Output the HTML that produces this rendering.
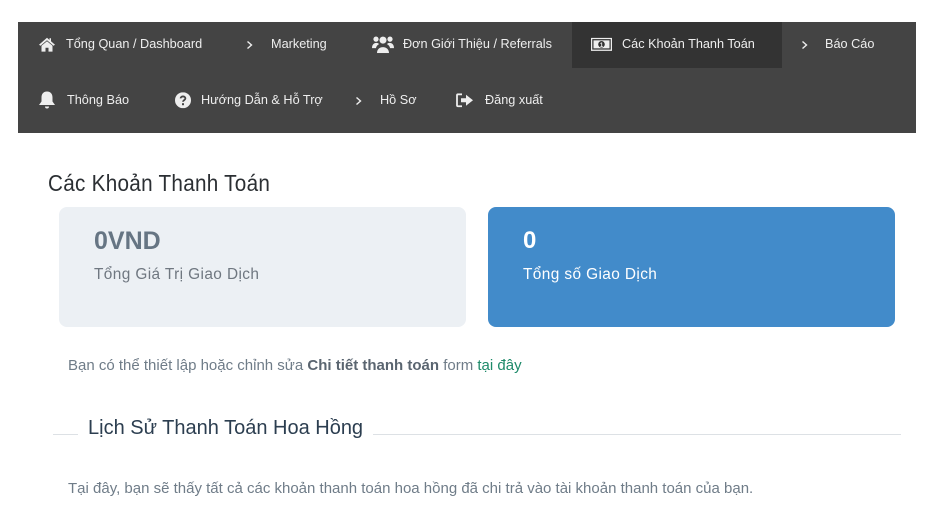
<!DOCTYPE html>
<html><head><meta charset="utf-8"><style>
*{margin:0;padding:0;box-sizing:border-box}
body{width:931px;height:525px;background:#fff;font-family:"Liberation Sans",sans-serif;position:relative;overflow:hidden}
.nav{position:absolute;left:18px;top:22px;width:898px;height:111px;background:#444}
.it{position:absolute;color:#eee;font-size:12.7px;line-height:44px;height:46px;white-space:nowrap}
.it svg{position:absolute;top:50%;transform:translateY(-55%)}
.act{background:#333}
h1{position:absolute;left:48px;top:170px;font-weight:normal;font-size:23px;color:#2b2f33;letter-spacing:.3px;transform:scaleX(.9);transform-origin:0 0}
.card{position:absolute;top:207px;width:407px;height:120px;border-radius:8px}
.card .n{position:absolute;left:35px;top:20px;font-size:24px;font-weight:bold}
.card .l{position:absolute;left:35px;top:59px;font-size:15.4px;letter-spacing:.4px}
p{position:absolute;font-size:15px;color:#6f7c88}
.h2{position:absolute;left:88px;top:417px;font-size:20px;color:#2c3e50}
.line{position:absolute;top:434px;height:1px;background:#dde1e5}
</style></head><body>
<div class="nav">
 <div class="it" style="left:0;top:0;padding-left:48px">
  <svg style="left:20px" width="18" height="15" viewBox="0 0 18 15"><path d="M9 1 L1 8 L2.5 9 L9 3.5 L15.5 9 L17 8 L13 4.5 V1.5 H11.5 V3.2 Z" fill="#eee"/><path d="M3.5 9 L9 4.5 L14.5 9 V15 H10.5 V11 H7.5 V15 H3.5 Z" fill="#eee"/></svg>Tổng Quan / Dashboard</div>
 <div class="it" style="left:228px;top:0;padding-left:25px"><svg style="left:0" width="8" height="10" viewBox="0 0 8 10"><path d="M1.5 2 L5.5 5.5 L1.5 9" stroke="#eee" stroke-width="1.4" fill="none"/></svg>Marketing</div>
 <div class="it" style="left:354px;top:0;padding-left:31px"><svg style="left:0" width="22" height="18" viewBox="0 0 22 18"><circle cx="11" cy="5" r="3.5" fill="#eee"/><circle cx="4" cy="4" r="2.6" fill="#eee"/><circle cx="18" cy="4" r="2.6" fill="#eee"/><path d="M5 18 C5 10 17 10 17 18Z" fill="#eee"/><path d="M0 13 C0 7 6 7 7 9 C5 10 4 12 4 13Z M22 13 C22 7 16 7 15 9 C17 10 18 12 18 13Z" fill="#eee"/></svg>Đơn Giới Thiệu / Referrals</div>
 <div class="it act" style="left:554px;top:0;width:210px;padding-left:50px"><svg style="left:19px" width="21" height="13" viewBox="0 0 21 13"><rect x="0.5" y="0.5" width="20" height="12" fill="none" stroke="#eee" stroke-width="1.5"/><rect x="2.5" y="2.5" width="16" height="8" fill="#eee"/><circle cx="10.5" cy="6.5" r="3.3" fill="#333"/><text x="10.5" y="9" font-size="6" fill="#eee" text-anchor="middle" font-family="Liberation Sans" font-weight="bold">1</text></svg>Các Khoản Thanh Toán</div>
 <div class="it" style="left:783px;top:0;padding-left:24px"><svg style="left:0" width="8" height="10" viewBox="0 0 8 10"><path d="M1.5 2 L5.5 5.5 L1.5 9" stroke="#eee" stroke-width="1.4" fill="none"/></svg>Báo Cáo</div>
 <div class="it" style="left:20px;top:56px;padding-left:29px"><svg style="left:0" width="18" height="19" viewBox="0 0 18 19"><path d="M9 1 C5 1 3.5 4 3.5 7 V11 L1 14.5 H17 L14.5 11 V7 C14.5 4 13 1 9 1Z" fill="#eee"/><path d="M7 16 A2 2 0 0 0 11 16Z" fill="#eee"/></svg>Thông Báo</div>
 <div class="it" style="left:157px;top:56px;padding-left:26px"><svg style="left:0" width="16" height="16" viewBox="0 0 16 16"><circle cx="8" cy="8" r="8" fill="#eee"/><path d="M5.6 6.2 C5.6 3.6 10.4 3.6 10.4 6.2 C10.4 7.8 8 8 8 9.6" stroke="#444" stroke-width="1.8" fill="none"/><rect x="7" y="11" width="2" height="2" fill="#444"/></svg>Hướng Dẫn &amp; Hỗ Trợ</div>
 <div class="it" style="left:337px;top:56px;padding-left:25px"><svg style="left:0" width="8" height="10" viewBox="0 0 8 10"><path d="M1.5 2 L5.5 5.5 L1.5 9" stroke="#eee" stroke-width="1.4" fill="none"/></svg>Hồ Sơ</div>
 <div class="it" style="left:438px;top:56px;padding-left:29px"><svg style="left:0" width="18" height="14" viewBox="0 0 18 14"><path d="M6 1 H2 Q1 1 1 2 V12 Q1 13 2 13 H6" stroke="#eee" stroke-width="1.8" fill="none"/><path d="M5 5 H10 V1.5 L17 7 L10 12.5 V9 H5Z" fill="#eee"/></svg>Đăng xuất</div>
</div>
<h1>Các Khoản Thanh Toán</h1>
<div class="card" style="left:59px;background:#ecf0f4"><div class="n" style="color:#667583;font-size:25px">0VND</div><div class="l" style="color:#6f7780">Tổng Giá Trị Giao Dịch</div></div>
<div class="card" style="left:488px;background:#428bca"><div class="n" style="color:#fff">0</div><div class="l" style="color:#fff">Tổng số Giao Dịch</div></div>
<p style="left:68px;top:357px">Bạn có thể thiết lập hoặc chỉnh sửa <b style="color:#5a6570">Chi tiết thanh toán</b> form <span style="color:#1e8a6a">tại đây</span></p>
<div class="line" style="left:53px;width:25px"></div>
<div class="h2">Lịch Sử Thanh Toán Hoa Hồng</div>
<div class="line" style="left:373px;width:528px"></div>
<p style="left:68px;top:480px">Tại đây, bạn sẽ thấy tất cả các khoản thanh toán hoa hồng đã chi trả vào tài khoản thanh toán của bạn.</p>
</body></html>
